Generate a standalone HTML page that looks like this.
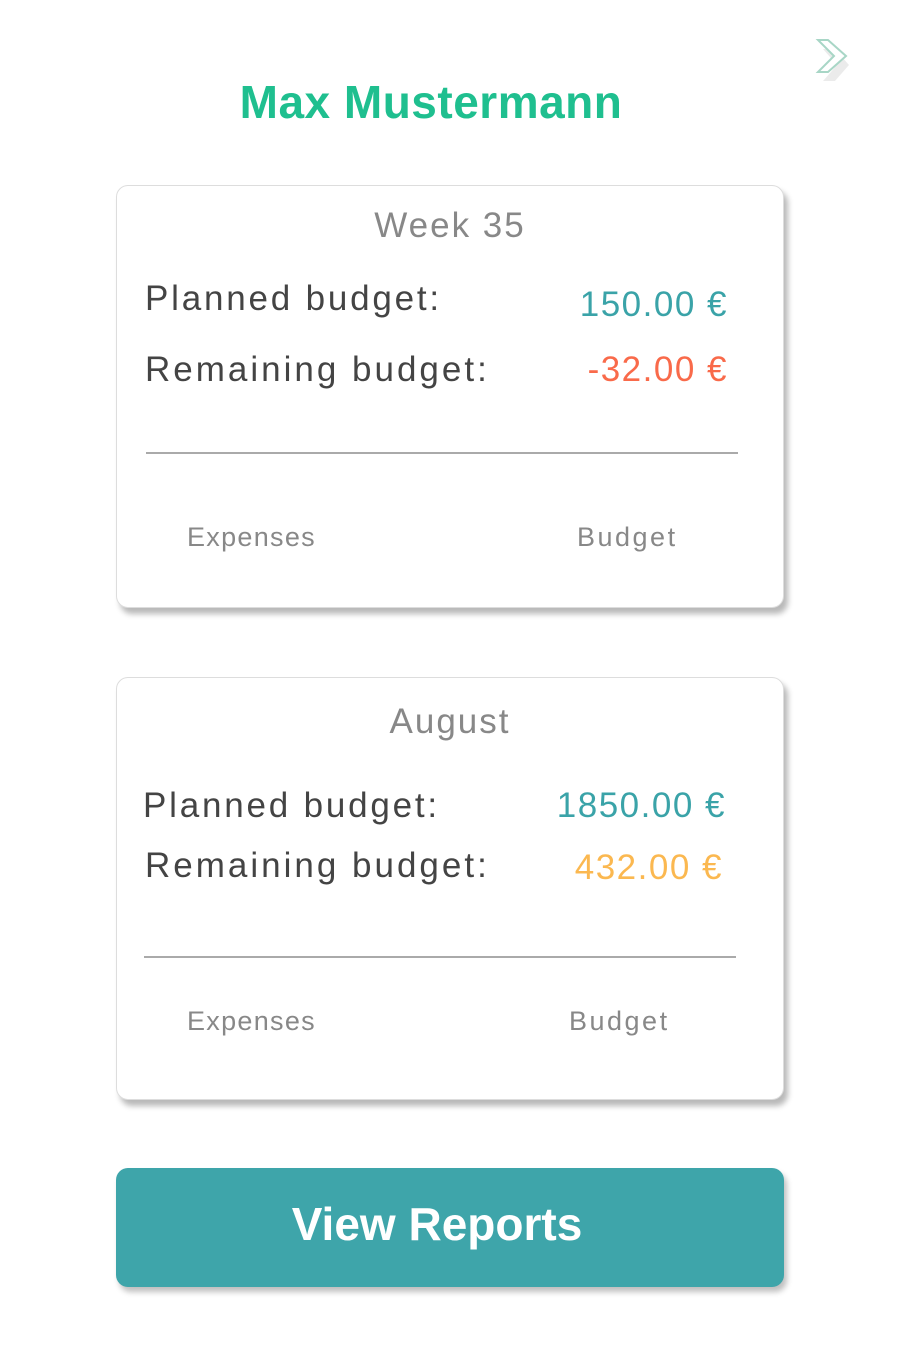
<!DOCTYPE html><html><head><style>
body{margin:0;width:900px;height:1370px;background:#fff;position:relative;font-family:"Liberation Sans",sans-serif;overflow:hidden}
.a{position:absolute;line-height:1;white-space:nowrap}
.lb{letter-spacing:2.8px}
.v{letter-spacing:1.5px}
.s{letter-spacing:1.3px}
.b{letter-spacing:2.5px}
.card{position:absolute;left:116px;width:666px;height:421px;border:1px solid #ddd;border-radius:12px;background:#fff;box-shadow:4px 6px 6px rgba(0,0,0,.28)}
.ln{position:absolute;height:2px;background:#aaa}
</style></head><body>
<svg style="position:absolute;left:812px;top:36px" width="44" height="48" viewBox="0 0 44 48"><path d="M8 8 L20 8 L34 24 L20 40 L8 40 L22 24 Z" fill="rgba(0,0,0,.08)" transform="translate(3,5)"/><path d="M6 4 L16 4 L34 20 L16 36 L6 36 L22 20 Z" fill="#fff" stroke="#a8d6c6" stroke-width="2"/></svg>
<div class="a" style="left:0;width:862px;text-align:center;top:79px;font-size:46px;font-weight:bold;color:#1fbf8f;letter-spacing:0.5px">Max Mustermann</div>
<div class="card" style="top:185px"></div>
<div class="a" style="left:0;width:900px;text-align:center;top:208px;font-size:35px;color:#888;letter-spacing:2px">Week 35</div>
<div class="a lb" style="left:145px;top:281px;font-size:35px;color:#444">Planned budget:</div>
<div class="a v" style="right:172px;top:287px;font-size:35px;color:#3aa3a8">150.00 €</div>
<div class="a lb" style="left:145px;top:352px;font-size:35px;color:#444;letter-spacing:3px">Remaining budget:</div>
<div class="a v" style="right:172px;top:352px;font-size:35px;color:#f96a4a">-32.00 €</div>
<div class="ln" style="left:146px;width:592px;top:452px"></div>
<div class="a s" style="left:187px;top:524px;font-size:27px;color:#888">Expenses</div>
<div class="a b" style="left:577px;top:524px;font-size:27px;color:#888">Budget</div>
<div class="card" style="top:677px"></div>
<div class="a" style="left:0;width:900px;text-align:center;top:704px;font-size:35px;color:#888;letter-spacing:2px">August</div>
<div class="a lb" style="left:143px;top:788px;font-size:35px;color:#444">Planned budget:</div>
<div class="a v" style="right:174px;top:788px;font-size:35px;color:#3aa3a8">1850.00 €</div>
<div class="a lb" style="left:145px;top:848px;font-size:35px;color:#444;letter-spacing:3px">Remaining budget:</div>
<div class="a v" style="right:177px;top:850px;font-size:35px;color:#fbb850">432.00 €</div>
<div class="ln" style="left:144px;width:592px;top:956px"></div>
<div class="a s" style="left:187px;top:1008px;font-size:27px;color:#888">Expenses</div>
<div class="a b" style="left:569px;top:1008px;font-size:27px;color:#888">Budget</div>
<div style="position:absolute;left:116px;top:1168px;width:668px;height:119px;background:#3ea5aa;border-radius:12px;box-shadow:3px 5px 6px rgba(0,0,0,.25)"></div>
<div class="a" style="left:0;width:874px;text-align:center;top:1201px;font-size:46px;font-weight:bold;color:#fff">View Reports</div>
</body></html>
